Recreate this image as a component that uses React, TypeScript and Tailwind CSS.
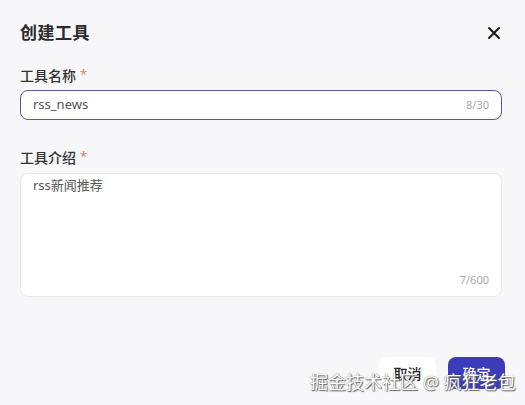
import React from "react";

export default function App() {
  return (
    <div
      className="relative w-[525px] h-[405px] overflow-hidden bg-[#f7f7fa] text-[#333]"
      style={{ fontFamily: '"Noto Sans", "Noto Sans CJK SC", sans-serif' }}
    >
      <div className="flex flex-col px-[20px] pt-[20px]">
        <div className="flex items-center justify-between h-[26px]">
          <div className="text-[17px] font-bold text-[#2b2b2b] tracking-[0.5px]">创建工具</div>
          <svg width="14" height="14" viewBox="0 0 14 14" className="mr-[4px]">
            <path d="M2 2 L12 12 M12 2 L2 12" stroke="#1a1a1a" strokeWidth="2" strokeLinecap="round" />
          </svg>
        </div>
        <div className="mt-[18px] h-[22px] flex items-center text-[14px] font-medium text-[#333]">
          工具名称<span className="ml-[4px] text-[#e08a6a] text-[13px]">*</span>
        </div>
        <div className="mt-[4px] h-[30px] w-[482px] flex items-center justify-between rounded-[8px] border border-[#5a55a8] bg-white pl-[12px] pr-[12px]">
          <span className="text-[13px] text-[#555]">rss_news</span>
          <span className="text-[11px] text-[#aaa]">8/30</span>
        </div>
        <div className="mt-[26px] h-[22px] flex items-center text-[14px] font-medium text-[#333]">
          工具介绍<span className="ml-[4px] text-[#e08a6a] text-[13px]">*</span>
        </div>
        <div className="mt-[5px] h-[124px] w-[482px] flex flex-col justify-between rounded-[8px] border border-[#e8e8ee] bg-white pl-[12px] pr-[12px] pt-[2px] pb-[8px]">
          <span className="text-[13px] text-[#555]">rss新闻推荐</span>
          <span className="self-end text-[11px] text-[#aaa]">7/600</span>
        </div>
        <div className="mt-[60px] flex justify-end gap-[12px] pr-[0px]">
          <div className="w-[57px] h-[32px] rounded-[8px] bg-white flex items-center justify-center text-[14px] font-medium text-[#222]">
            取消
          </div>
          <div className="w-[57px] h-[32px] rounded-[8px] bg-[#3c3cba] flex items-center justify-center text-[14px] font-medium text-white">
            确定
          </div>
        </div>
      </div>
      <div
        className="absolute left-[310px] top-[369px] text-[18px] text-white whitespace-nowrap"
        style={{ textShadow: "0 0 1px #555, 1px 1px 1px #666" }}
      >
        掘金技术社区 @ 疯狂老包
      </div>
    </div>
  );
}
